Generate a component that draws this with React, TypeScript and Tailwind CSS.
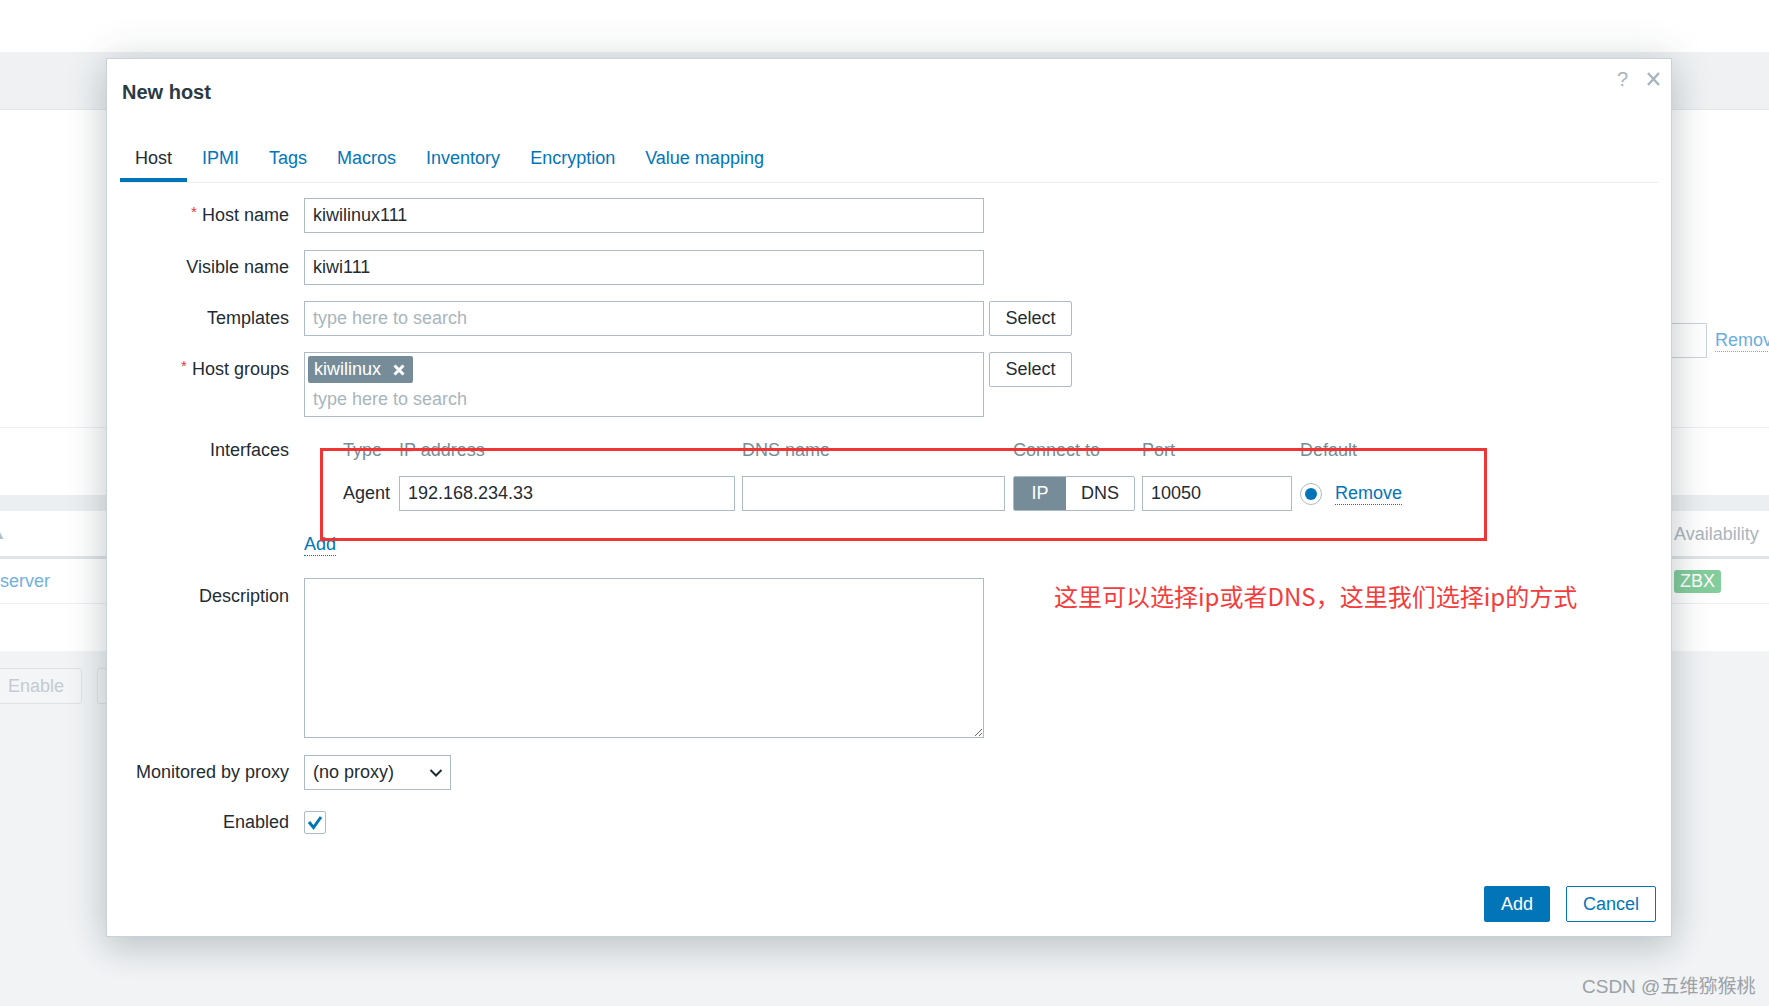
import React from "react";

const labelCls =
  "flex h-[35px] w-[168px] shrink-0 items-center justify-end text-[18px] text-[#1f2c33]";
const inputCls =
  "flex h-[35px] items-center border border-[#acbbc5] bg-white px-[8px] text-[18px] text-[#1f2c33]";
const tabs = ["Host", "IPMI", "Tags", "Macros", "Inventory", "Encryption", "Value mapping"];

function Req() {
  return <span className="relative -top-[3px] mr-[5px] text-[15px] text-[#e33734]">*</span>;
}

function Background() {
  return (
    <div className="flex h-full flex-col">
      <div className="h-[52px] bg-white" />
      <div className="h-[58px] border-b border-[#e3e7ea] bg-[#eff1f3]" />
      <div className="h-[318px] border-b border-[#eef0f2] bg-white pt-[213px]">
        <div className="flex h-[35px] items-center overflow-hidden pl-[1507px]">
          <div className="h-[35px] w-[200px] shrink-0 border border-[#c9d3d9]" />
          <span className="ml-[8px] shrink-0 border-b border-dotted border-[#6aaee0] text-[18px] leading-[22px] text-[#6aaee0]">
            Remove
          </span>
        </div>
      </div>
      <div className="h-[67px] bg-white" />
      <div className="h-[16px] bg-[#eceff1]" />
      <div className="flex h-[48px] items-center overflow-hidden border-b-[3px] border-[#dfe4e7] bg-white pt-[2px]">
        <span className="-ml-[7px] w-[1681px] shrink-0 text-[13px] text-[#b4bec5]">▲</span>
        <span className="text-[18px] text-[#aab5bd]">Availability</span>
      </div>
      <div className="flex h-[45px] items-center overflow-hidden border-b border-[#eef0f2] bg-white">
        <span className="w-[1674px] shrink-0 text-[18px] text-[#72b0de]">server</span>
        <span className="rounded-[3px] bg-[#83cd9c] px-[6px] text-[18px] leading-[23px] text-white">ZBX</span>
      </div>
      <div className="h-[47px] bg-white" />
      <div className="flex flex-1 items-start gap-[15px] bg-[#f1f3f5] pt-[17px]">
        <div className="-ml-[6px] flex h-[36px] w-[88px] items-center rounded-[3px] border border-[#dde2e5] bg-[#f3f5f6] pl-[13px] text-[18px] text-[#c3cbd1]">
          Enable
        </div>
        <div className="h-[36px] w-[60px] rounded-[3px] border border-[#dde2e5] bg-[#f3f5f6]" />
      </div>
    </div>
  );
}

function Dialog() {
  return (
    <div className="absolute left-[106px] top-[58px] flex h-[879px] w-[1566px] flex-col border border-[#c9d2d8] bg-white shadow-[0_0_40px_rgba(40,55,65,0.16),0_14px_30px_rgba(40,55,65,0.14)]">
      <div className="flex items-start justify-between">
        <h2 className="pl-[15px] pt-[21px] text-[20px] font-bold leading-[24px] text-[#2b3a44]">New host</h2>
        <div className="flex items-center gap-[18px] pr-[10px] pt-[8px] text-[#a6b4bd]">
          <span className="text-[20px] leading-[24px]">?</span>
          <svg width="15" height="16" viewBox="0 0 15 16">
            <path d="M2 2 L13 14 M13 2 L2 14" stroke="currentColor" strokeWidth="2.4" />
          </svg>
        </div>
      </div>

      <div className="mx-[13px] mt-[34px] flex border-b border-[#ebeef0]">
        {tabs.map((t, i) => (
          <div
            key={t}
            className={
              i === 0
                ? "flex h-[44px] items-center border-b-4 border-[#0275b8] px-[15px] pt-[1px] text-[18px] text-[#1f2c33]"
                : "flex h-[44px] items-center border-b-4 border-transparent px-[15px] pt-[1px] text-[18px] text-[#0275b8]"
            }
          >
            {t}
          </div>
        ))}
      </div>

      <div className="ml-[14px] flex flex-col pt-[15px]">
        <div className="flex">
          <div className={labelCls}>
            <Req />
            Host name
          </div>
          <div className={inputCls + " ml-[15px] w-[680px]"}>kiwilinux111</div>
        </div>

        <div className="mt-[17px] flex">
          <div className={labelCls}>Visible name</div>
          <div className={inputCls + " ml-[15px] w-[680px]"}>kiwi111</div>
        </div>

        <div className="mt-[16px] flex">
          <div className={labelCls}>Templates</div>
          <div className={inputCls + " ml-[15px] w-[680px] text-[#a9b5bd]"}>type here to search</div>
          <div className="ml-[5px] flex h-[35px] w-[83px] items-center justify-center rounded-[2px] border border-[#acbbc5] text-[18px] text-[#1f2c33]">
            Select
          </div>
        </div>

        <div className="mt-[16px] flex items-start">
          <div className={labelCls}>
            <Req />
            Host groups
          </div>
          <div className="ml-[15px] flex h-[65px] w-[680px] flex-col border border-[#acbbc5] pl-[3px] pt-[3px]">
            <div className="flex h-[27px] w-[105px] items-center rounded-[2px] bg-[#768d99] pl-[6px] text-[18px] text-white">
              kiwilinux
              <svg className="ml-[12px]" width="12" height="12" viewBox="0 0 12 12">
                <path d="M1.5 1.5 L10.5 10.5 M10.5 1.5 L1.5 10.5" stroke="white" strokeWidth="3" />
              </svg>
            </div>
            <div className="mt-[5px] pl-[5px] text-[18px] leading-[22px] text-[#a9b5bd]">type here to search</div>
          </div>
          <div className="ml-[5px] flex h-[35px] w-[83px] items-center justify-center rounded-[2px] border border-[#acbbc5] text-[18px] text-[#1f2c33]">
            Select
          </div>
        </div>

        <div className="mt-[22px] flex items-start">
          <div className={labelCls + " relative -top-[6px]"}>Interfaces</div>
          <div className="ml-[15px] flex flex-col">
            <div className="pl-[39px]">
              <div className="flex h-[22px] items-center text-[18px] text-[#768d99]">
                <span className="w-[56px]">Type</span>
                <span className="w-[343px]">IP address</span>
                <span className="w-[271px]">DNS name</span>
                <span className="w-[129px]">Connect to</span>
                <span className="w-[158px]">Port</span>
                <span>Default</span>
              </div>
              <div className="mt-[15px] flex h-[35px] items-center text-[18px] text-[#1f2c33]">
                <span className="w-[56px]">Agent</span>
                <div className={inputCls + " mr-[7px] w-[336px]"}>192.168.234.33</div>
                <div className={inputCls + " mr-[8px] w-[263px]"} />
                <div className="mr-[7px] flex h-[35px] w-[122px] overflow-hidden rounded-[2px] border border-[#acbbc5]">
                  <div className="flex w-[52px] items-center justify-center bg-[#768d99] text-white">IP</div>
                  <div className="flex flex-1 items-center justify-center">DNS</div>
                </div>
                <div className={inputCls + " mr-[8px] w-[150px]"}>10050</div>
                <div className="mr-[13px] flex h-[22px] w-[22px] items-center justify-center rounded-full border border-[#acbbc5]">
                  <div className="h-[12px] w-[12px] rounded-full bg-[#0275b8]" />
                </div>
                <span className="border-b border-dotted border-[#0275b8] leading-[22px] text-[#0275b8]">Remove</span>
              </div>
            </div>
            <div className="mt-[23px] flex">
              <span className="border-b border-dotted border-[#0275b8] text-[18px] leading-[21px] text-[#0275b8]">Add</span>
            </div>
          </div>
        </div>

        <div className="mt-[22px] flex items-start">
          <div className={labelCls + " pt-[2px]"}>Description</div>
          <textarea
            readOnly
            className="ml-[15px] h-[160px] w-[680px] resize-y border border-[#acbbc5] bg-white outline-none"
          />
        </div>

        <div className="mt-[17px] flex">
          <div className={labelCls}>Monitored by proxy</div>
          <div className={inputCls + " ml-[15px] w-[147px] justify-between pr-[7px]"}>
            (no proxy)
            <svg width="14" height="10" viewBox="0 0 14 10">
              <path d="M1.5 2 L7 7.5 L12.5 2" fill="none" stroke="#1f2c33" strokeWidth="2" />
            </svg>
          </div>
        </div>

        <div className="mt-[15px] flex items-center">
          <div className={labelCls + " h-[23px]"}>Enabled</div>
          <div className="ml-[15px] flex h-[23px] w-[22px] items-center justify-center rounded-[2px] border border-[#acbbc5]">
            <svg width="16" height="15" viewBox="0 0 16 15">
              <path d="M2 7 L6.5 12.5 L14 2" fill="none" stroke="#0275b8" strokeWidth="3" />
            </svg>
          </div>
        </div>
      </div>

      <div className="mt-auto flex justify-end gap-[16px] pb-[14px] pr-[15px]">
        <div className="flex h-[36px] w-[66px] items-center justify-center rounded-[2px] bg-[#0275b8] text-[18px] text-white">
          Add
        </div>
        <div className="flex h-[36px] w-[90px] items-center justify-center rounded-[2px] border border-[#0275b8] text-[18px] text-[#0275b8]">
          Cancel
        </div>
      </div>
    </div>
  );
}

export default function App() {
  return (
    <div className="relative h-[1006px] w-[1769px] overflow-hidden bg-[#f1f3f5] font-['Liberation_Sans',Arial,sans-serif]">
      <Background />
      <Dialog />
      {/* annotation drawn over the screenshot */}
      <div className="absolute left-[320px] top-[448px] h-[93px] w-[1167px] border-[3px] border-[#f03535]" />
      <div className="absolute left-[1054px] top-[579px] font-['Noto_Sans_CJK_SC',sans-serif] text-[24px] leading-[34px] text-[#f53c3c]">
        这里可以选择ip或者DNS，这里我们选择ip的方式
      </div>
      <div className="absolute left-[1582px] top-[975px] font-['Liberation_Sans','Noto_Sans_CJK_SC',sans-serif] text-[19px] leading-[24px] text-[#9ba1a6]">
        CSDN @五维猕猴桃
      </div>
    </div>
  );
}
